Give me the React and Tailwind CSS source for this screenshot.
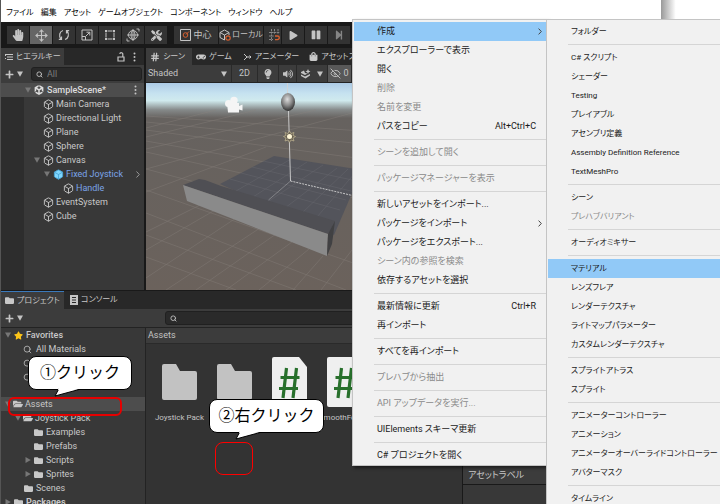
import React from "react";
import { Box, EyeOff, Hash, Move, Search } from "lucide-react";
import { FaFolder, FaFolderOpen, FaGamepad, FaHandPaper, FaLightbulb, FaPlay, FaPause, FaPlus, FaShoppingBag, FaStar, FaStepForward, FaTools, FaVolumeUp } from "react-icons/fa";
import { FaUnity } from "react-icons/fa6";

const menuBar = ["ファイル", "編集", "アセット", "ゲームオブジェクト", "コンポーネント", "ウィンドウ", "ヘルプ"];

const SEP = { sep: true };
const contextItems = [
  { label: "作成", arrow: true, active: true },
  { label: "エクスプローラーで表示" },
  { label: "開く" },
  { label: "削除", off: true },
  { label: "名前を変更", off: true },
  { label: "パスをコピー", keys: "Alt+Ctrl+C" },
  SEP,
  { label: "シーンを追加して開く", off: true },
  SEP,
  { label: "パッケージマネージャーを表示", off: true },
  SEP,
  { label: "新しいアセットをインポート..." },
  { label: "パッケージをインポート", arrow: true },
  { label: "パッケージをエクスポート..." },
  { label: "シーン内の参照を検索", off: true },
  { label: "依存するアセットを選択" },
  SEP,
  { label: "最新情報に更新", keys: "Ctrl+R" },
  { label: "再インポート" },
  SEP,
  { label: "すべてを再インポート" },
  SEP,
  { label: "プレハブから抽出", off: true },
  SEP,
  { label: "API アップデータを実行...", off: true },
  SEP,
  { label: "UIElements スキーマ更新" },
  SEP,
  { label: "C# プロジェクトを開く" },
];

const createItems = [
  { label: "フォルダー" },
  SEP,
  { label: "C# スクリプト" },
  { label: "シェーダー" },
  { label: "Testing" },
  { label: "プレイアブル" },
  { label: "アセンブリ定義" },
  { label: "Assembly Definition Reference" },
  { label: "TextMeshPro" },
  SEP,
  { label: "シーン" },
  { label: "プレハブバリアント", off: true },
  SEP,
  { label: "オーディオミキサー" },
  SEP,
  { label: "マテリアル", active: true },
  { label: "レンズフレア" },
  { label: "レンダーテクスチャ" },
  { label: "ライトマップパラメーター" },
  { label: "カスタムレンダーテクスチャ" },
  SEP,
  { label: "スプライトアトラス" },
  { label: "スプライト" },
  SEP,
  { label: "アニメーターコントローラー" },
  { label: "アニメーション" },
  { label: "アニメーターオーバーライドコントローラー" },
  { label: "アバターマスク" },
  SEP,
  { label: "タイムライン" },
];

function Menu({ items, label, className }) {
  return (
    <div role="menu" aria-label={label} className={"absolute overflow-hidden border border-[#c4c4c4] bg-[#f1f1f1] pt-0.5 text-[#1a1a1a] " + className}>
      {items.map((it, i) =>
        it.sep ? (
          <div key={i} role="separator" className="flex h-[7px] items-center pl-[21px]">
            <div className="h-px w-full bg-[#d5d5d5]" />
          </div>
        ) : (
          <button
            key={i}
            type="button"
            role="menuitem"
            disabled={it.off}
            className={"ml-px flex h-[19px] w-full items-center pl-[23px] pr-3 text-left whitespace-nowrap " + (it.active ? "bg-[#91c9f7]" : it.off ? "text-[#8a8a8a]" : "")}
          >
            <span className="flex-1">{it.label}</span>
            {it.keys && <span>{it.keys}</span>}
            {it.arrow && (
              <svg viewBox="0 0 4 7" className="mr-[-6px] h-[7px] w-1" fill="none" stroke="#444">
                <path d="M.6.6 3.3 3.5.6 6.4" />
              </svg>
            )}
          </button>
        )
      )}
    </div>
  );
}

function Caret({ open = true, className = "" }) {
  return (
    <svg viewBox="0 0 6 6" className={"size-1.5 shrink-0 " + className} fill="currentColor">
      <path d={open ? "M0 .5h6L3 5.8z" : "M.5 0v6L5.8 3z"} />
    </svg>
  );
}

function Dots() {
  return (
    <svg viewBox="0 0 3 10" className="h-2.5 w-[3px] shrink-0" fill="#c4c4c4">
      <circle cx="1.5" cy="1.5" r="1" />
      <circle cx="1.5" cy="5" r="1" />
      <circle cx="1.5" cy="8.5" r="1" />
    </svg>
  );
}

function ToolButton({ label, active, className = "w-[22px]", children }) {
  return (
    <button type="button" aria-label={label} className={"flex h-[18px] items-center justify-center whitespace-nowrap text-[#c4c4c4] " + (active ? "bg-[#656565] " : "bg-[#333] ") + className}>
      {children}
    </button>
  );
}

function Toolbar() {
  return (
    <div className="flex h-[26px] items-center gap-[7px] bg-[#191919] pl-1.5">
      <div className="flex gap-px">
        <ToolButton label="ハンド"><FaHandPaper size={12} /></ToolButton>
        <ToolButton label="移動" active><Move size={13} strokeWidth={2} /></ToolButton>
        <ToolButton label="回転">
          <svg viewBox="0 0 12 12" className="size-3" fill="none" stroke="currentColor" strokeWidth="1.200">
            <path d="M5 1.500C1.500 2.500.500 7 3 10M.800 10.300h2.700V7.600M7 10.500C10.500 9.500 11.500 5 9 2M11.200 1.700H8.500v2.700" />
          </svg>
        </ToolButton>
        <ToolButton label="スケール">
          <svg viewBox="0 0 12 12" className="size-3" fill="none" stroke="currentColor">
            <path d="M1 1h10v10H1zM1 7.500h3.500V11M5 7l3.500-3.500M5.500 3.200h3.300v3.300" />
          </svg>
        </ToolButton>
        <ToolButton label="矩形">
          <svg viewBox="0 0 12 12" className="size-3" fill="none" stroke="currentColor">
            <path d="M3.500 2h5M3.500 10h5M2 3.500v5M10 3.500v5" />
            <path d="M1 1h2v2H1zM9 1h2v2H9zM1 9h2v2H1zM9 9h2v2H9z" fill="currentColor" stroke="none" />
          </svg>
        </ToolButton>
        <ToolButton label="トランスフォーム">
          <svg viewBox="0 0 14 14" className="size-[14px]" fill="none" stroke="currentColor" strokeWidth=".9">
            <circle cx="7" cy="7" r="4.500" />
            <ellipse cx="7" cy="7" rx="2" ry="4.500" />
            <path d="M1 7h12M7 1v12M10.500 1H13v2.500M3.500 13H1v-2.500" />
          </svg>
        </ToolButton>
        <ToolButton label="カスタムツール"><FaTools size={11} /></ToolButton>
      </div>
      <div className="flex gap-px text-[9px]">
        <ToolButton label="中心" className="w-11 gap-0.5">
          <svg viewBox="0 0 11 12" className="h-3 w-[11px]" fill="none" stroke="currentColor">
            <path d="M.5.5h10v11H.5z" />
            <circle cx="5.500" cy="6" r="2.300" stroke="#d8602f" />
            <path d="m6 5.500 3-3" stroke="#d8602f" />
          </svg>
          <span>中心</span>
        </ToolButton>
        <ToolButton label="ローカル" className="w-11 gap-px text-[8px]">
          <svg viewBox="0 0 12 12" className="size-3 shrink-0" fill="none" stroke="currentColor">
            <path d="M5.500 11 1 8.500v-5L5.500 1 10 3.500V6M1 3.500 5.500 6 10 3.500M5.500 6v5" />
            <circle cx="9" cy="9" r="2.200" stroke="#d8602f" strokeWidth="1.200" />
          </svg>
          <span>ローカル</span>
        </ToolButton>
        <ToolButton label="グリッドスナップ" className="w-[17px] pl-1">
          <svg viewBox="0 0 11 12" className="h-3 w-[11px]" fill="none" stroke="#858585">
            <path d="M0 3.500h11M0 7h5M0 10.500h4M2.500 0v12M5.500 0v5M9 0v5" strokeDasharray="2 .7" />
            <path d="M6 7h2.500a1.800 1.800 0 0 1 0 3.600H6" stroke="#d8602f" strokeWidth="1.300" />
          </svg>
        </ToolButton>
        <ToolButton label="再生"><FaPlay size={9} /></ToolButton>
        <ToolButton label="一時停止"><FaPause size={10} /></ToolButton>
        <ToolButton label="ステップ"><FaStepForward size={10} className="text-[#858585]" /></ToolButton>
      </div>
    </div>
  );
}

function Tab({ active, accent, icon, children, className = "" }) {
  return (
    <button
      type="button"
      role="tab"
      aria-selected={!!active}
      className={"flex h-full shrink-0 items-center gap-[3px] px-1 text-[8px] whitespace-nowrap text-[#c8c8c8] " + (active ? "bg-[#3c3c3c] " : "") + (accent ? "border-t border-[#3a79bb] " : "") + className}
    >
      {icon}
      <span>{children}</span>
    </button>
  );
}

function SearchBox({ label, placeholder, className }) {
  return (
    <label className={"flex h-3.5 items-center gap-1 rounded-[3px] border border-[#202020] bg-[#2a2a2a] px-1 text-[#c4c4c4] " + className}>
      <Search size={7} strokeWidth={3} className="shrink-0" />
      <input aria-label={label} placeholder={placeholder} className="w-full min-w-0 bg-transparent text-[9px] outline-none placeholder:text-[#7c7c7c]" />
    </label>
  );
}

const hierarchy = [
  { name: "Main Camera", pad: "pl-[19px]" },
  { name: "Directional Light", pad: "pl-[19px]" },
  { name: "Plane", pad: "pl-[19px]" },
  { name: "Sphere", pad: "pl-[19px]" },
  { name: "Canvas", pad: "pl-[10px]", open: true },
  { name: "Fixed Joystick", pad: "pl-5", open: true, prefab: true },
  { name: "Handle", pad: "pl-[39px]", blue: true },
  { name: "EventSystem", pad: "pl-[19px]" },
  { name: "Cube", pad: "pl-[19px]" },
];

function Hierarchy() {
  return (
    <section className="flex w-[145px] shrink-0 flex-col border-r-2 border-[#191919] bg-[#383838]">
      <div className="flex h-[17px] items-center bg-[#282828] pr-2">
        <Tab active className="w-[63px]" icon={
          <svg viewBox="0 0 8 8" className="size-2 shrink-0" fill="none" stroke="currentColor"><path d="M0 1.500h8M2 4h6M2 6.500h6M.5 2v1M.5 5v1" /></svg>
        }>ヒエラルキー</Tab>
        <div className="flex-1" />
        <svg viewBox="0 0 8 10" className="mr-2 h-2.5 w-2" fill="none" stroke="#c4c4c4" strokeWidth="1.200">
          <path d="M1 5h6v4H1zM5.800 5V2.500a1.500 1.500 0 0 0-3-.5" />
        </svg>
        <Dots />
      </div>
      <div className="flex h-[18px] items-center bg-[#3c3c3c] pl-1 pr-0.5 text-[#c4c4c4]">
        <button type="button" aria-label="追加" className="flex items-center gap-[3px]"><FaPlus size={9} /><Caret /></button>
        <SearchBox label="ヒエラルキーを検索" placeholder="All" className="ml-2 flex-1" />
      </div>
      <div className="flex flex-1 flex-col bg-[#2d2d2d] text-[9px] text-[#c8c8c8]">
        <div className="flex h-3.5 items-center bg-[#4d4d4d] pl-6 pr-[7px] font-medium text-[#dcdcdc]">
          <Caret className="text-[#777]" />
          <FaUnity size={10} className="mx-[3px]" />
          <span className="flex-1">SampleScene*</span>
          <Dots />
        </div>
        <ul className="ml-[23px] flex-1 bg-[#383838]">
          {hierarchy.map((n) => (
            <li key={n.name} className={"flex h-3.5 items-center pr-1 whitespace-nowrap " + n.pad}>
              {n.open && <Caret className="mr-[3px] text-[#777]" />}
              <Box size={11} strokeWidth={2} className={"mr-0.5 shrink-0 " + (n.prefab ? "fill-[#7fd6fd] text-[#4aa6d8]" : "")} />
              <span className={"flex-1 " + (n.prefab || n.blue ? "text-[#7ba4e8]" : "")}>{n.name}</span>
              {n.prefab && (
                <svg viewBox="0 0 4 7" className="h-[7px] w-1" fill="none" stroke="#999"><path d="M.5.5 3.300 3.500.5 6.500" /></svg>
              )}
            </li>
          ))}
        </ul>
      </div>
    </section>
  );
}

function SceneDrawing() {
  return (
    <svg viewBox="145 83 316 207" className="h-[207px] w-[316px]" role="img" aria-label="シーンビュー">
      <defs>
        <linearGradient id="sky" x1="0" y1="83" x2="0" y2="290" gradientUnits="userSpaceOnUse">
          <stop offset="0" stopColor="#adcbe6" />
          <stop offset=".05" stopColor="#c6e2f0" />
          <stop offset=".085" stopColor="#d0eaee" />
          <stop offset=".13" stopColor="#858989" />
          <stop offset=".17" stopColor="#66625f" />
          <stop offset="1" stopColor="#6b625c" />
        </linearGradient>
        <radialGradient id="ball" cx=".45" cy=".35" r=".7">
          <stop offset="0" stopColor="#ddd" />
          <stop offset=".5" stopColor="#888" />
          <stop offset="1" stopColor="#222" />
        </radialGradient>
      </defs>
      <path fill="url(#sky)" d="M145 83h316v207H145z" />
      <g stroke="#8b8580" strokeWidth=".6" opacity=".6" fill="none">
        <path d="M145 152 461 222M145 169l90 24M145 141l316 56M145 130l316 42M145 122l316 32M145 116l316 22M145 190l210 74M145 213l200 77M145 235l150 55M145 257l90 33" />
        <path d="M145 128l70-18M145 137l110-27M145 149l170-39M145 169l206-56M145 192l120-45M145 232l80-40M145 250l90-52M145 278l90-60M165 290l94-62M195 290l80-56M225 290l66-48M258 290l50-41M292 290l30-34M320 290l31-40" />
      </g>
      <path d="m219 184 54-28 88 14-28 65z" fill="#53545b" />
      <g stroke="#6b6c72" strokeWidth=".6" opacity=".7">
        <path d="m229 179 110 31M240 173l105 27M251 167l103 25M262 161l94 20M235 191l55-32M252 197l54-35M268 201l54-36M284 208l52-40M301 213l46-44M316 217l38-44" />
      </g>
      <path d="m182 185 16-6 6 1 16 6 114 35-7 13z" fill="#4f4f54" />
      <path d="m182 185 145 49-1 22-140-55z" fill="#8a8a8a" />
      <path d="m327 234 7-13-3 23-5 12z" fill="#414143" />
      <g stroke="#d2d2d2" strokeWidth=".9" fill="none">
        <path d="M286.500 83v12M287.500 111l2 70" />
        <path d="m289.500 181 64 15" strokeDasharray="2 1" />
        <path d="m289.500 181-22 19" opacity=".4" />
      </g>
      <ellipse cx="287" cy="102" rx="7" ry="9" fill="url(#ball)" />
      <path d="m288.500 131 1.500 2.500 3-1-1 3 2.500 1-2.500 1.500 1 3-3-1-1.500 2.500-1.500-2.500-3 1 1-3-2.500-1.500 2.500-1-1-3 3 1z" fill="#6b6353" stroke="#cfc29c" strokeWidth=".6" />
      <circle cx="288.500" cy="136.500" r="2.500" fill="#fff6d6" />
      <g fill="#f5f5f5">
        <circle cx="233" cy="100.500" r="3.700" />
        <circle cx="227.500" cy="103.500" r="3.500" />
        <path d="M226 103h12v3l3.500-1.500v6L238 109.500v3h-11z" />
      </g>
    </svg>
  );
}

function Scene() {
  const bar = "flex h-full items-center justify-center text-[#c4c4c4]";
  return (
    <section className="flex min-w-0 flex-1 flex-col overflow-hidden bg-[#383838]">
      <div role="tablist" className="flex h-[17px] bg-[#282828]">
        <Tab active className="w-[46px]" icon={<Hash size={10} strokeWidth={3} />}>シーン</Tab>
        <Tab icon={<FaGamepad size={10} />}>ゲーム</Tab>
        <Tab className="pl-2" icon={
          <svg viewBox="0 0 8 8" className="size-2" fill="none" stroke="currentColor"><path d="M0 1l3 3-3 3M3 4h4M5.500 2.500 7 4 5.500 5.500" /></svg>
        }>アニメーター</Tab>
        <Tab className="pl-1.5" icon={<FaShoppingBag size={9} />}>アセットストア</Tab>
      </div>
      <div className="flex h-[18px] gap-px border-b border-[#232323] bg-[#2a2a2a]">
        <label className={bar + " w-[85px] bg-[#3c3c3c] px-0.5 text-[9px]"}>
          <select aria-label="描画モード" className="w-full appearance-none bg-transparent outline-none"><option>Shaded</option></select>
          <Caret className="mr-0.5" />
        </label>
        <button type="button" className={bar + " w-[25px] bg-[#3c3c3c] text-[9px]"}>2D</button>
        <button type="button" aria-label="ライト" className={bar + " w-5 bg-[#3c3c3c]"}><FaLightbulb size={10} /></button>
        <button type="button" aria-label="オーディオ" className={bar + " w-[17px] bg-[#3c3c3c]"}><FaVolumeUp size={10} /></button>
        <button type="button" aria-label="エフェクト" className={bar + " w-[30px] gap-1.5 bg-[#3c3c3c]"}>
          <svg viewBox="0 0 10 10" className="size-2.5" fill="currentColor">
            <path d="M0 5.500 4 7.500 9 5v1.500L4.500 9.500 0 7zM0 3l3-1.500L4 4l2.500.5L4 6 0 4zM7 0l.8 1.700L9.500 2.500l-1.700.8L7 5l-.8-1.700-1.700-.8 1.700-.8z" />
          </svg>
          <Caret />
        </button>
        <button type="button" className={bar + " w-[23px] gap-0.5 bg-[#585858] text-[9px]"}><EyeOff size={11} strokeWidth={2} />0</button>
        <div className="flex-1 bg-[#3c3c3c]" />
      </div>
      <div className="h-[207px] overflow-hidden bg-[#6b625c]"><SceneDrawing /></div>
    </section>
  );
}

const folders = [
  { name: "Assets", pad: "pl-1", open: true, selected: true },
  { name: "Joystick Pack", pad: "pl-[14px]", open: true },
  { name: "Examples", pad: "pl-6", leaf: true },
  { name: "Prefabs", pad: "pl-6", leaf: true },
  { name: "Scripts", pad: "pl-6" },
  { name: "Sprites", pad: "pl-6" },
  { name: "Scenes", pad: "pl-[14px]", leaf: true },
  { name: "Packages", pad: "pl-1", bold: true },
];

function ProjectTree() {
  return (
    <div className="w-[145px] shrink-0 border-r border-[#232323] bg-[#383838] text-[9px] text-[#c8c8c8]">
      <div className="flex h-3.5 items-center pl-1 font-medium">
        <Caret className="text-[#777]" />
        <FaStar size={9} className="mx-[3px] text-[#fcc419]" />
        Favorites
      </div>
      <ul className="mb-[13px]">
        {["All Materials", "", ""].map((s, i) => (
          <li key={i} className="flex h-3.5 items-center gap-1 pl-[22px]"><Search size={9} strokeWidth={2} />{s}</li>
        ))}
      </ul>
      <ul>
        {folders.map((f) => (
          <li key={f.name} className={"flex h-3.5 items-center whitespace-nowrap " + f.pad + (f.selected ? " bg-[#4d4d4d]" : "") + (f.bold ? " font-bold" : "")}>
            {f.leaf ? <span className="w-1.5" /> : <Caret open={!!f.open} className="text-[#777]" />}
            {f.open ? <FaFolderOpen size={10} className="mx-0.5" /> : <FaFolder size={9} className="mx-[3px]" />}
            {f.name}
          </li>
        ))}
      </ul>
    </div>
  );
}

function FolderTile() {
  return (
    <svg viewBox="0 0 36 36" className="mb-[7px] size-9" fill="#c2c2c2">
      <path d="M2 0h12l4 7h15a2 2 0 0 1 2 2v25a2 2 0 0 1-2 2H2a2 2 0 0 1-2-2V2a2 2 0 0 1 2-2z" />
    </svg>
  );
}

function ScriptTile() {
  return (
    <svg viewBox="0 0 36 50" className="h-[50px] w-9">
      <path fill="#efefef" d="M2 0h25l8 10v38a2 2 0 0 1-2 2H2a2 2 0 0 1-2-2V2a2 2 0 0 1 2-2z" />
      <path d="M14.500 11 11 41M24.500 11 21 41M8.500 20.500h19M7 31.500h19" stroke="#28702c" strokeWidth="3.200" fill="none" />
    </svg>
  );
}

function Tile({ icon, children }) {
  return (
    <div className="flex w-[55px] shrink-0 flex-col items-center justify-end gap-[7px] text-[8px] whitespace-nowrap">
      {icon}
      <div className="h-2">{children}</div>
    </div>
  );
}

function Project() {
  return (
    <section className="flex min-w-0 flex-1 flex-col bg-[#333]">
      <div role="tablist" className="flex h-[18px] shrink-0 bg-[#282828]">
        <Tab active accent className="w-[63px]" icon={<FaFolder size={9} className="shrink-0" />}>プロジェクト</Tab>
        <Tab className="pl-1.5" icon={
          <svg viewBox="0 0 8 10" className="h-2.5 w-2"><path fill="#c4c4c4" d="M0 0h8v10H0z" /><path stroke="#282828" d="M2 2.500h4M2 5h4M2 7.500h4" /></svg>
        }>コンソール</Tab>
      </div>
      <div className="flex h-[19px] shrink-0 items-center border-b border-[#232323] bg-[#3c3c3c] pl-1 text-[#c4c4c4]">
        <button type="button" aria-label="作成" className="flex w-40 items-center gap-[3px]"><FaPlus size={9} /><Caret /></button>
        <SearchBox label="プロジェクトを検索" className="flex-1" />
      </div>
      <div className="flex flex-1">
        <ProjectTree />
        <div className="min-w-0 flex-1 overflow-hidden text-[#c4c4c4]">
          <div className="flex h-4 items-center border-b border-[#2a2a2a] bg-[#3c3c3c] pl-0.5 text-[9px]">Assets</div>
          <div className="flex pt-[13px] pl-1.5">
            <Tile icon={<FolderTile />}>Joystick Pack</Tile>
            <Tile icon={<FolderTile />} />
            <Tile icon={<ScriptTile />} />
            <Tile icon={<ScriptTile />}>SmoothFollow</Tile>
          </div>
        </div>
      </div>
    </section>
  );
}

function Inspector() {
  return (
    <section className="flex w-[199px] shrink-0 flex-col justify-end border-l border-[#191919] bg-[#383838]">
      <div className="flex h-[19px] items-center border-b border-[#191919] bg-[#3c3c3c] pl-[5px] text-[9px] text-[#c8c8c8]">アセットラベル</div>
      <div className="h-[19px]" />
    </section>
  );
}

function Callout({ className, children }) {
  return (
    <div className={"absolute flex h-[34px] items-center justify-center rounded-lg border border-black bg-white text-base whitespace-nowrap text-black [font-feature-settings:normal] " + className}>
      {children}
      <svg viewBox="0 0 26 9" className="absolute top-[31px] left-[25px] h-[9px] w-[26px]">
        <path d="M5 .5 1 8 25 1.500" fill="#fff" stroke="#000" />
        <path d="M4.500 0h22L20 2H4z" fill="#fff" />
      </svg>
    </div>
  );
}

export default function App() {
  return (
    <div className="relative h-screen overflow-hidden bg-white font-[Roboto,'Noto_Sans_CJK_JP',sans-serif] leading-none [font-feature-settings:'palt']">
      <div className="flex h-full">
        <main className="flex min-w-0 flex-1 flex-col overflow-hidden border-l border-[#555] bg-[#191919]">
          <nav className="flex h-[22px] shrink-0 items-center gap-[7px] bg-white pt-1 pl-[5px] text-[8px] text-black">
            {menuBar.map((m) => (
              <button key={m} type="button" className="whitespace-nowrap">{m}</button>
            ))}
          </nav>
          <Toolbar />
          <div className="flex min-h-0 flex-1">
            <div className="flex min-w-0 flex-1 flex-col">
              <div className="flex shrink-0">
                <Hierarchy />
                <Scene />
              </div>
              <div className="mt-px flex min-h-0 flex-1 overflow-hidden"><Project /></div>
            </div>
            <Inspector />
          </div>
        </main>
        <div className="w-[59px] shrink-0 bg-linear-to-r from-[#999] via-white via-25% to-white" />
      </div>

      <Callout className="top-[356px] left-7 w-[104px]">①クリック</Callout>
      <Callout className="top-[399px] left-[209px] w-[115px]">②右クリック</Callout>
      <div className="absolute top-[397px] left-2 h-[19px] w-[114px] rounded-md border-2 border-[#e60000]" />
      <div className="absolute top-[442px] left-[215px] h-[33px] w-[38px] rounded-lg border border-[#ff0000]" />

      <Menu items={contextItems} label="アセット" className="top-[19px] left-[352px] w-[196px] text-[9px] shadow-[2px_2px_3px_rgba(0,0,0,0.5)]" />
      <Menu items={createItems} label="作成" className="top-[19px] right-0 bottom-0 left-[546px] border-r-0 border-b-0 text-[8px]" />
    </div>
  );
}
